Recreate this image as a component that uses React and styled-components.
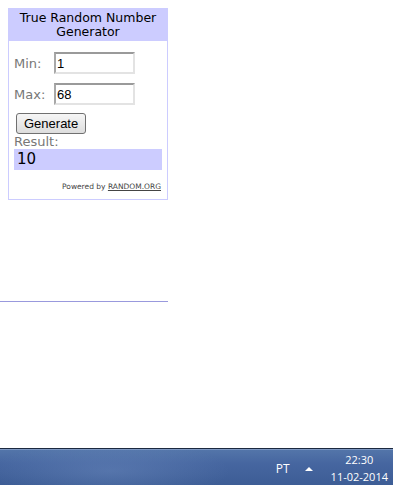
import styled, { createGlobalStyle } from 'styled-components'

const GlobalStyle = createGlobalStyle`
  html, body {
    margin: 0;
    padding: 0;
    background: #fff;
  }
`

const Page = styled.div`
  display: flex;
  flex-direction: column;
  height: 485px;
  overflow: hidden;
`

const Content = styled.div`
  flex: 1;
  padding-top: 8px;
`

const Widget = styled.div`
  margin-left: 8px;
  width: 158px;
  border: 1px solid #ccccff;
  font-family: "DejaVu Sans", Verdana, sans-serif;
`

const Header = styled.div`
  background: #ccccff;
  color: #000;
  text-align: center;
  font-size: 12.5px;
  line-height: 14px;
  padding: 2px 0 2px;
`

const Body = styled.div`
  padding: 11px 5px 5px 5px;
`

const FieldRow = styled.div`
  display: flex;
  align-items: center;
  margin-bottom: 9px;
`

const Label = styled.span`
  width: 40px;
  color: #777;
  font-size: 13px;
`

const Input = styled.input`
  box-sizing: border-box;
  width: 81px;
  height: 22px;
  padding: 0 1px;
  border: 2px solid #e3e3e3;
  border-top-color: #9a9a9a;
  border-left-color: #a8a8a8;
  font-family: "Liberation Sans", Arial, sans-serif;
  font-size: 13px;
  color: #000;
  outline: none;
`

const Button = styled.button`
  display: block;
  margin: -1px 0 0 2px;
  height: 21px;
  padding: 0 7px;
  border: 1px solid #707070;
  border-radius: 3px;
  background: linear-gradient(#f6f6f6, #dddddd);
  font-family: "Liberation Sans", Arial, sans-serif;
  font-size: 13px;
  color: #000;
`

const ResultLabel = styled.div`
  color: #777;
  font-size: 13px;
  line-height: 14px;
  margin-top: 1px;
`

const ResultBox = styled.div`
  background: #ccccff;
  font-size: 15px;
  line-height: 21px;
  padding-left: 3px;
`

const Powered = styled.div`
  text-align: right;
  font-size: 7.5px;
  color: #444;
  margin-top: 12px;
  margin-bottom: 3px;
  margin-right: 1px;

  a {
    color: #444;
    text-decoration: underline;
  }
`

const Rule = styled.div`
  width: 168px;
  height: 1px;
  background: #9999dd;
  margin-top: 101px;
`

const Taskbar = styled.div`
  height: 37px;
  box-sizing: border-box;
  border-top: 1px solid #1b2940;
  background:
    radial-gradient(ellipse 120px 30px at 110px 22px, rgba(120, 150, 200, 0.35), transparent),
    linear-gradient(#5476aa, #4666a0 40%, #3d5d95);
  box-shadow: inset 0 1px 0 #7d97c2;
  display: flex;
  align-items: center;
  justify-content: flex-end;
  padding-right: 5px;
  color: #fff;
  font-family: "Open Sans", "Noto Sans", sans-serif;
  font-size: 11px;
`

const Lang = styled.span`
  font-size: 12px;
  margin-right: 15px;
  margin-top: 2px;
`

const TrayArrow = styled.span`
  width: 0;
  height: 0;
  border-left: 4px solid transparent;
  border-right: 4px solid transparent;
  border-bottom: 4px solid #fff;
  margin-right: 18px;
  margin-top: 4px;
`

const Clock = styled.div`
  display: flex;
  flex-direction: column;
  align-items: center;
  line-height: 17px;
  margin-top: 2px;
`

export default function App() {
  return (
    <Page>
      <GlobalStyle />
      <Content>
        <Widget>
          <Header>True Random Number<br />Generator</Header>
          <Body>
            <FieldRow>
              <Label>Min:</Label>
              <Input defaultValue="1" />
            </FieldRow>
            <FieldRow>
              <Label>Max:</Label>
              <Input defaultValue="68" />
            </FieldRow>
            <Button>Generate</Button>
            <ResultLabel>Result:</ResultLabel>
            <ResultBox>10</ResultBox>
            <Powered>Powered by <a>RANDOM.ORG</a></Powered>
          </Body>
        </Widget>
        <Rule />
      </Content>
      <Taskbar>
        <Lang>PT</Lang>
        <TrayArrow />
        <Clock>
          <span>22:30</span>
          <span>11-02-2014</span>
        </Clock>
      </Taskbar>
    </Page>
  )
}
